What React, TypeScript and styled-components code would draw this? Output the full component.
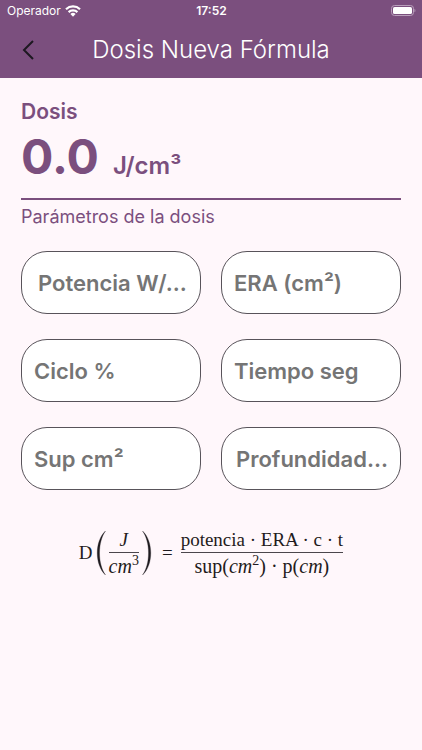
import React from "react";
import styled, { createGlobalStyle } from "styled-components";

const GlobalStyle = createGlobalStyle`
  *, *::before, *::after { box-sizing: border-box; }
  body {
    margin: 0;
    background: #fff7fb;
    color: #7b4f7e;
    font-family: Inter, "Liberation Sans", sans-serif;
  }
`;

const Header = styled.header`
  background: #7b4f7e;
  color: #fff;
`;

const StatusBar = styled.div`
  display: grid;
  grid-template-columns: 1fr auto 1fr;
  align-items: center;
  height: 22px;
  padding: 0 6px 0 7px;
  font-size: 12px;
  line-height: 16px;
`;

const Carrier = styled.div`
  display: flex;
  align-items: center;
  gap: 4px;
`;

const Clock = styled.time`
  font-weight: 600;
`;

const BatteryIcon = styled.svg`
  justify-self: end;
`;

const NavBar = styled.div`
  display: grid;
  grid-template-columns: 56px 1fr 56px;
  align-items: center;
  height: 56px;
`;

const BackButton = styled.button`
  display: flex;
  align-items: center;
  justify-content: center;
  height: 48px;
  padding: 0;
  border: 0;
  background: none;
  color: #1d1820;
`;

const Title = styled.h1`
  margin: 0;
  font-size: 24px;
  font-weight: 300;
  line-height: 32px;
  text-align: center;
  white-space: nowrap;
`;

const Content = styled.main`
  padding: 22px 21px;
`;

const DoseLabel = styled.h2`
  margin: 0;
  font-size: 21px;
  font-weight: 600;
  line-height: 24px;
`;

const DoseResult = styled.output`
  display: flex;
  align-items: baseline;
  gap: 14px;
  padding-top: 1px;
  border-bottom: 2px solid #7b4f7e;
  font-weight: 700;
  line-height: 64px;
`;

const DoseValue = styled.span`
  font-size: 48px;
`;

const DoseUnit = styled.span`
  font-size: 24px;
  font-weight: 600;
`;

const SectionLabel = styled.h3`
  margin: 5px 0 22px;
  font-size: 18px;
  font-weight: 400;
  line-height: 24px;
`;

const Fields = styled.form`
  display: grid;
  grid-template-columns: 1fr 1fr;
  gap: 25px 20px;
`;

const Field = styled.input<{ $inset?: number }>`
  width: 100%;
  min-width: 0;
  height: 63px;
  padding: 0 8px 0 ${({ $inset = 12 }) => $inset}px;
  border: 1px solid #58535a;
  border-radius: 26px;
  background: #fff;
  color: #333;
  font: 600 22px/28px Inter, "Liberation Sans", sans-serif;
  text-overflow: ellipsis;

  &::placeholder {
    color: #757575;
    opacity: 1;
  }
`;

const Formula = styled.div`
  display: flex;
  align-items: center;
  justify-content: center;
  margin-top: 38px;
  color: #1f1b20;
  font-family: "Liberation Serif", serif;
  font-size: 19px;
  line-height: 24px;
  white-space: nowrap;
`;

const Paren = styled.svg`
  width: 10px;
  height: 46px;
  margin: 0 3px;
`;

const Equals = styled.span`
  margin: 0 8px 0 7px;
`;

const Fraction = styled.span`
  display: flex;
  flex-direction: column;
  align-items: center;
`;

const Numerator = styled.span`
  align-self: stretch;
  border-bottom: 1px solid #4b464c;
  text-align: center;
`;

const Denominator = styled.span`
  padding-top: 1px;
  font-size: 20px;
`;

const Power = styled.sup`
  font-size: 14px;
  font-style: normal;
  line-height: 0;
`;

const fields = [
  { label: "Potencia W/...", inset: 16 },
  { label: "ERA (cm²)" },
  { label: "Ciclo %" },
  { label: "Tiempo seg" },
  { label: "Sup cm²" },
  { label: "Profundidad...", inset: 14 },
];

export default function App() {
  return (
    <>
      <GlobalStyle />
      <Header>
        <StatusBar>
          <Carrier>
            Operador
            <svg width="16" height="12" viewBox="0 0 16 12" fill="none" stroke="#fff" strokeWidth="2.2" aria-hidden="true">
              <path d="M1 4.2a10.2 10.2 0 0 1 14 0" />
              <path d="M3.6 7.1a6.5 6.5 0 0 1 8.8 0" />
              <path d="M8 11.8 5.4 9.1a3.7 3.7 0 0 1 5.2 0Z" fill="#fff" stroke="none" />
            </svg>
          </Carrier>
          <Clock>17:52</Clock>
          <BatteryIcon width="26" height="12" viewBox="0 0 26 12" aria-hidden="true">
            <rect x="1.5" y=".5" width="22" height="10" rx="3" fill="none" stroke="#b99fbb" />
            <rect x="3" y="2" width="19" height="7" rx="1.6" fill="#fff" />
            <path d="M24.5 3.7c1.2.5 1.2 3.1 0 3.6Z" fill="#b99fbb" />
          </BatteryIcon>
        </StatusBar>
        <NavBar>
          <BackButton type="button" aria-label="Atrás">
            <svg width="12" height="20" viewBox="0 0 12 20" fill="none" stroke="currentColor" strokeWidth="2" aria-hidden="true">
              <path d="M11 1 2 10l9 9" />
            </svg>
          </BackButton>
          <Title>Dosis Nueva Fórmula</Title>
        </NavBar>
      </Header>
      <Content>
        <DoseLabel>Dosis</DoseLabel>
        <DoseResult>
          <DoseValue>0.0</DoseValue>
          <DoseUnit>J/cm³</DoseUnit>
        </DoseResult>
        <SectionLabel>Parámetros de la dosis</SectionLabel>
        <Fields>
          {fields.map(({ label, inset }) => (
            <Field key={label} type="text" inputMode="decimal" placeholder={label} aria-label={label} $inset={inset} />
          ))}
        </Fields>
        <Formula>
          <span>D</span>
          <Paren viewBox="0 0 10 46" aria-hidden="true">
            <path d="M9.5 1C-1.5 11-1.5 35 9.5 45 1.5 34 1.5 12 9.5 1Z" fill="currentColor" stroke="currentColor" strokeWidth=".3" />
          </Paren>
          <Fraction>
            <Numerator><i>J</i></Numerator>
            <Denominator><i>cm</i><Power>3</Power></Denominator>
          </Fraction>
          <Paren viewBox="0 0 10 46" aria-hidden="true">
            <path d="M.5 1C11.5 11 11.5 35 .5 45 8.5 34 8.5 12 .5 1Z" fill="currentColor" stroke="currentColor" strokeWidth=".3" />
          </Paren>
          <Equals>=</Equals>
          <Fraction>
            <Numerator>potencia · ERA · c · t</Numerator>
            <Denominator>sup(<i>cm</i><Power>2</Power>) · p(<i>cm</i>)</Denominator>
          </Fraction>
        </Formula>
      </Content>
    </>
  );
}
